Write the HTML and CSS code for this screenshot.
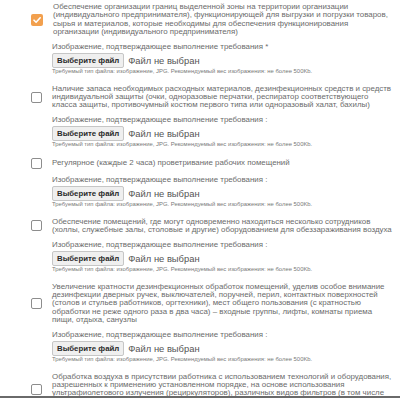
FILE: index.html
```html
<!DOCTYPE html>
<html lang="ru">
<head>
<meta charset="utf-8">
<title>Требования</title>
<link rel="stylesheet" href="styles.css">
</head>
<body>
<div class="list">

  <div class="item">
    <div class="row">
      <span class="cb checked"><svg viewBox="0 0 12 12" width="12" height="12"><path d="M3 6.2 L5.1 8.3 L9.2 3.8" fill="none" stroke="#fff" stroke-width="1.6" stroke-linecap="round" stroke-linejoin="round"/></svg></span>
      <p class="txt">Обеспечение организации границ выделенной зоны на территории организации<br>(индивидуального предпринимателя), функционирующей для выгрузки и погрузки товаров,<br>сырья и материалов, которые необходимы для обеспечения функционирования<br>организации (индивидуального предпринимателя)</p>
    </div>
    <div class="upload">
      <div class="lbl">Изображение, подтверждающее выполнение требования *</div>
      <div class="file"><span class="btn">Выберите файл</span><span class="none">Файл не выбран</span></div>
      <div class="hint">Требуемый тип файла: изображение, JPG. Рекомендуемый вес изображения: не более 500Kb.</div>
    </div>
  </div>

  <div class="item">
    <div class="row">
      <span class="cb"></span>
      <p class="txt">Наличие запаса необходимых расходных материалов, дезинфекционных средств и средств<br>индивидуальной защиты (очки, одноразовые перчатки, респиратор соответствующего<br>класса защиты, противочумный костюм первого типа или одноразовый халат, бахилы)</p>
    </div>
    <div class="upload">
      <div class="lbl">Изображение, подтверждающее выполнение требования :</div>
      <div class="file"><span class="btn">Выберите файл</span><span class="none">Файл не выбран</span></div>
      <div class="hint">Требуемый тип файла: изображение, JPG. Рекомендуемый вес изображения: не более 500Kb.</div>
    </div>
  </div>

  <div class="item">
    <div class="row">
      <span class="cb"></span>
      <p class="txt">Регулярное (каждые 2 часа) проветривание рабочих помещений</p>
    </div>
    <div class="upload">
      <div class="lbl">Изображение, подтверждающее выполнение требования :</div>
      <div class="file"><span class="btn">Выберите файл</span><span class="none">Файл не выбран</span></div>
      <div class="hint">Требуемый тип файла: изображение, JPG. Рекомендуемый вес изображения: не более 500Kb.</div>
    </div>
  </div>

  <div class="item">
    <div class="row">
      <span class="cb"></span>
      <p class="txt">Обеспечение помещений, где могут одновременно находиться несколько сотрудников<br>(холлы, служебные залы, столовые и другие) оборудованием для обеззараживания воздуха</p>
    </div>
    <div class="upload">
      <div class="lbl">Изображение, подтверждающее выполнение требования :</div>
      <div class="file"><span class="btn">Выберите файл</span><span class="none">Файл не выбран</span></div>
      <div class="hint">Требуемый тип файла: изображение, JPG. Рекомендуемый вес изображения: не более 500Kb.</div>
    </div>
  </div>

  <div class="item">
    <div class="row">
      <span class="cb"></span>
      <p class="txt">Увеличение кратности дезинфекционных обработок помещений, уделив особое внимание<br>дезинфекции дверных ручек, выключателей, поручней, перил, контактных поверхностей<br>(столов и стульев работников, оргтехники), мест общего пользования (с кратностью<br>обработки не реже одного раза в два часа) – входные группы, лифты, комнаты приема<br>пищи, отдыха, санузлы</p>
    </div>
    <div class="upload">
      <div class="lbl">Изображение, подтверждающее выполнение требования :</div>
      <div class="file"><span class="btn">Выберите файл</span><span class="none">Файл не выбран</span></div>
      <div class="hint">Требуемый тип файла: изображение, JPG. Рекомендуемый вес изображения: не более 500Kb.</div>
    </div>
  </div>

  <div class="item">
    <div class="row">
      <span class="cb"></span>
      <p class="txt">Обработка воздуха в присутствии работника с использованием технологий и оборудования,<br>разрешенных к применению установленном порядке, на основе использования<br>ультрафиолетового излучения (рециркуляторов), различных видов фильтров (в том числе<br>электрофильтров) в соответствии с действующими методическими документами</p>
    </div>
    <div class="upload">
      <div class="lbl">Изображение, подтверждающее выполнение требования :</div>
      <div class="file"><span class="btn">Выберите файл</span><span class="none">Файл не выбран</span></div>
      <div class="hint">Требуемый тип файла: изображение, JPG. Рекомендуемый вес изображения: не более 500Kb.</div>
    </div>
  </div>

</div>
<div class="edge"></div>
</body>
</html>
```

FILE: styles.css
```css
html, body {
  margin: 0;
  padding: 0;
  background: #fff;
  overflow: hidden;
}

body {
  font-family: "Liberation Sans", Arial, sans-serif;
  color: #6b6b6b;
}

.list {
  padding: 3px 0 0 31px;
}

.item {
  margin-bottom: 10px;
}

.row {
  display: flex;
  align-items: center;
  gap: 10px;
}

.cb {
  flex: none;
  width: 11px;
  height: 11px;
  box-sizing: border-box;
  border: 1px solid #8d8d8d;
  border-radius: 2px;
  background: #fff;
  display: flex;
  align-items: center;
  justify-content: center;
}

.cb.checked {
  width: 12px;
  height: 12px;
  border: none;
  background: #f2a04e;
}

.txt {
  margin: 0;
  font-size: 7.9px;
  line-height: 8.3px;
  white-space: nowrap;
}

.upload {
  margin-left: 21px;
}

.lbl {
  margin-top: 5.5px;
  font-size: 7.9px;
  line-height: 10px;
  white-space: nowrap;
}

.file {
  margin-top: 1px;
  display: flex;
  align-items: center;
  gap: 4px;
}

.btn {
  height: 15px;
  box-sizing: border-box;
  padding: 0 4px;
  display: flex;
  align-items: center;
  background: #efefef;
  border: 1px solid #c6c6c6;
  border-radius: 2px;
  color: #2a2a2a;
  font-size: 7.8px;
  font-weight: bold;
  white-space: nowrap;
}

.none {
  color: #555;
  font-size: 9.4px;
  white-space: nowrap;
}

.hint {
  font-size: 5.9px;
  line-height: 7px;
  color: #7a7a7a;
  white-space: nowrap;
}

.edge {
  position: fixed;
  left: 0;
  right: 0;
  bottom: 0;
  height: 2px;
  background: #6a6a6a;
}
```
